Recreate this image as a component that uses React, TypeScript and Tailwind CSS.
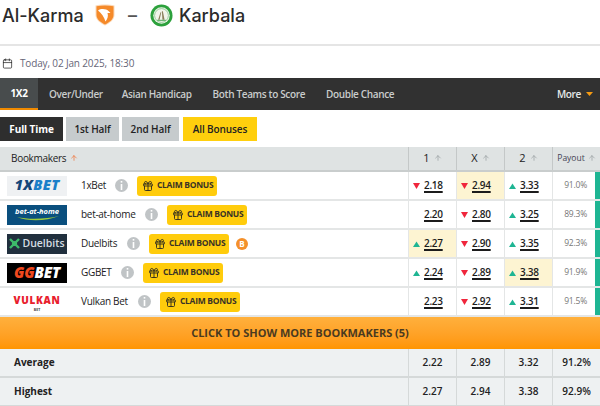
import React from "react";
import { ArrowUp, Calendar, Gift } from "lucide-react";

type Dir = "up" | "down" | null;
type Odd = { v: string; d: Dir; hi?: boolean };
type Row = {
  logo: React.ReactNode;
  name: string;
  nameGap: string;
  odds: Odd[];
  payout: string;
  btc?: boolean;
};

const Tri = ({ d }: { d: Dir }) => {
  if (!d) return <span className="w-[7px] shrink-0" />;
  return (
    <svg width="7" height="6" viewBox="0 0 7 6" className="shrink-0">
      {d === "up" ? <path d="M3.5 0.5 7 6H0z" fill="#1eb593" /> : <path d="M0 0h7L3.5 6z" fill="#f0263c" />}
    </svg>
  );
};

const InfoDot = () => (
  <span className="flex h-[13px] w-[13px] shrink-0 items-center justify-center rounded-full bg-[#c0c4c6]">
    <svg width="3" height="9" viewBox="0 0 3 9">
      <rect x="0.7" y="0" width="1.6" height="1.6" fill="#fff" />
      <rect x="0.7" y="3" width="1.6" height="6" fill="#fff" />
    </svg>
  </span>
);

const Claim = () => (
  <span className="ml-[9px] flex h-[20px] w-[80px] shrink-0 items-center gap-[3px] rounded-[3px] bg-[#ffcc0c] pl-[5px] text-[8.5px] font-bold tracking-[-0.3px] whitespace-nowrap text-[#3a3326]">
    <Gift size={12} strokeWidth={1.8} color="#2c2a20" className="shrink-0" />
    CLAIM BONUS
  </span>
);

const LogoBox = ({ className, children }: { className: string; children: React.ReactNode }) => (
  <div className={`flex h-[20px] w-[60px] shrink-0 items-center overflow-hidden ${className}`}>{children}</div>
);

const rows: Row[] = [
  {
    logo: (
      <LogoBox className="justify-center bg-[#eff1f3]">
        <span className="text-[14.5px] leading-none font-extrabold tracking-[0.3px] text-[#1a7fc9] italic">
          <span className="text-[#14467a]">1X</span>BET
        </span>
      </LogoBox>
    ),
    name: "1xBet",
    nameGap: "w-[34px]",
    odds: [
      { v: "2.18", d: "down" },
      { v: "2.94", d: "down", hi: true },
      { v: "3.33", d: "up" },
    ],
    payout: "91.0%",
  },
  {
    logo: (
      <LogoBox className="relative flex-col justify-center bg-[#0a4f7e]">
        <span className="mt-[-5px] text-[7.5px] leading-none font-bold text-white italic">bet-at-home</span>
        <svg width="46" height="6" viewBox="0 0 46 6" className="absolute bottom-[3px] left-[8px]">
          <path d="M2 1C14 6 32 5 44 0C32 3 14 4 2 1z" fill="#9ccb3b" />
        </svg>
      </LogoBox>
    ),
    name: "bet-at-home",
    nameGap: "w-[64px]",
    odds: [
      { v: "2.20", d: null },
      { v: "2.80", d: "down" },
      { v: "3.25", d: "up" },
    ],
    payout: "89.3%",
  },
  {
    logo: (
      <LogoBox className="justify-center gap-[2px] bg-[#21303e]">
        <svg width="11" height="11" viewBox="0 0 11 11">
          <path d="M1 1l9 9M10 1l-9 9" stroke="#3dbb6a" strokeWidth="2.4" />
          <circle cx="5.5" cy="5.5" r="2.6" fill="#3dbb6a" />
        </svg>
        <span className="text-[10.5px] leading-none font-semibold text-[#d5dce2]">Duelbits</span>
      </LogoBox>
    ),
    name: "Duelbits",
    nameGap: "w-[46px]",
    odds: [
      { v: "2.27", d: "up", hi: true },
      { v: "2.90", d: "down" },
      { v: "3.35", d: "up" },
    ],
    payout: "92.3%",
    btc: true,
  },
  {
    logo: (
      <LogoBox className="justify-center bg-black">
        <span className="text-[15px] leading-none font-extrabold tracking-[-0.2px] text-white italic">
          <span className="text-[#f0481e]">GG</span>BET
        </span>
      </LogoBox>
    ),
    name: "GGBET",
    nameGap: "w-[40px]",
    odds: [
      { v: "2.24", d: "up" },
      { v: "2.89", d: "down" },
      { v: "3.38", d: "up", hi: true },
    ],
    payout: "91.9%",
  },
  {
    logo: (
      <LogoBox className="flex-col justify-start bg-white">
        <div className="mt-[1px] h-[14px] text-[10px] leading-[14px] font-extrabold tracking-[0.7px] text-[#e8202c]">VULKAN</div>
        <div className="h-[5px] text-[3.5px] leading-[5px] font-bold text-[#444]">BET</div>
      </LogoBox>
    ),
    name: "Vulkan Bet",
    nameGap: "w-[57px]",
    odds: [
      { v: "2.23", d: null },
      { v: "2.92", d: "down" },
      { v: "3.31", d: "up" },
    ],
    payout: "91.5%",
  },
];

const SortUp = ({ c = "#9aa0a3" }: { c?: string }) => <ArrowUp size={8} strokeWidth={2.2} color={c} className="shrink-0" />;

const nav = [
  { t: "Over/Under", c: "ml-[11px] mr-[19px]" },
  { t: "Asian Handicap", c: "mr-[21px]" },
  { t: "Both Teams to Score", c: "mr-[21px]" },
  { t: "Double Chance", c: "" },
];

const gridCols = "grid grid-cols-[408px_48px_48px_48px_48px]";

export default function App() {
  return (
    <div className="h-[406px] w-[600px] overflow-hidden bg-white font-['Open_Sans',sans-serif] text-[#222]">
      <div className="flex h-[46px] items-start border-b-2 border-[#e5e5e5] pt-[2px] pl-[2px]">
        <div className="flex h-[26px] items-center font-['Inter',sans-serif] text-[18px] font-medium text-[#2b2b2b]">
          <span className="w-[93px]">Al-Karma</span>
          <svg width="20" height="22" viewBox="0 0 20 22" className="shrink-0">
            <path d="M0.5 1.5C6 .3 14 .3 19.5 1.5V11C19.5 16 14 19.5 10 21.5 6 19.5 .5 16 .5 11z" fill="#fbd9b8" />
            <path d="M1.5 2.3C7 1.3 13 1.3 18.5 2.3V11C18.5 15.5 14 18.5 10 20.4 6 18.5 1.5 15.5 1.5 11z" fill="#f58a2a" />
            <path d="M3 6.5C6 4.5 11 4.5 14 7.5L15.5 9 12.5 9C13.5 12 12.5 15 10.5 17.5 9 13 6.5 9 3 6.5z" fill="#fff" />
          </svg>
          <span className="ml-[13px] w-[22px] text-[#555]">–</span>
          <svg width="23" height="23" viewBox="0 0 24 24" className="shrink-0">
            <circle cx="12" cy="12" r="11.5" fill="#2ca13c" />
            <circle cx="12" cy="12" r="8.6" fill="#f2f4ea" />
            <circle cx="12" cy="12" r="7.2" fill="none" stroke="#7cc487" strokeWidth="0.8" />
            <path d="M8.5 16.5 11 8.5h.8L10 16.5zM13 16.5 12.4 7.5h1l1.8 9z" fill="#8a7f5a" />
            <path d="M7.5 16.5h9v1h-9z" fill="#4aa356" />
          </svg>
          <span className="ml-[6px]">Karbala</span>
        </div>
      </div>

      <div className="flex h-[32px] items-center pt-[2px] pl-[2px] text-[10px] tracking-[-0.15px] text-[#667]">
        <Calendar size={11} strokeWidth={1.6} color="#222" className="shrink-0" />
        <span className="ml-[7px]">Today, 02 Jan 2025, 18:30</span>
      </div>

      <div className="flex h-[32px] items-stretch bg-[#313131] text-[10px] font-semibold tracking-[-0.35px] text-[#c9cccc]">
        <div className="flex w-[38px] items-center justify-center border-b-[2px] border-[#f08a00] bg-[#484c4d] font-bold text-white">1X2</div>
        {nav.map((n) => (
          <div key={n.t} className={`flex items-center whitespace-nowrap ${n.c}`}>
            {n.t}
          </div>
        ))}
        <div className="ml-auto flex items-center gap-[5px] pr-[7px] text-[#e6e9ea]">
          More
          <svg width="7" height="4" viewBox="0 0 7 4">
            <path d="M0 0h7L3.5 4z" fill="#f59a12" />
          </svg>
        </div>
      </div>

      <div className="mt-[7px] flex h-[24px] text-[10px] font-semibold tracking-[-0.1px]">
        <div className="flex w-[63px] items-center justify-center bg-[#2e2e2e] font-bold text-white">Full Time</div>
        <div className="ml-[3px] flex w-[53px] items-center justify-center bg-[#c6cbcd]">1st Half</div>
        <div className="ml-[3px] flex w-[57px] items-center justify-center bg-[#c6cbcd]">2nd Half</div>
        <div className="ml-[4px] flex w-[74px] items-center justify-center bg-[#ffcf0d]">All Bonuses</div>
      </div>

      <div className={`${gridCols} mt-[6px] h-[25px] border-b-2 border-[#c9cdcd] bg-[#dfe3e3] text-[10px]`}>
        <div className="flex items-center gap-[4px] pb-[1px] pl-[11px] font-medium tracking-[-0.3px]">
          Bookmakers <SortUp c="#f0743a" />
        </div>
        {["1", "X", "2"].map((h) => (
          <div key={h} className="flex items-center justify-center gap-[4px] border-l border-[#c4c8c8] pb-[1px] text-[11px] text-[#222]">
            {h} <SortUp />
          </div>
        ))}
        <div className="flex items-center justify-center gap-[3px] border-l border-[#c4c8c8] pb-[1px] text-[8.5px] font-medium text-[#445]">
          Payout <SortUp />
        </div>
      </div>

      {rows.map((r) => (
        <div key={r.name} className={`${gridCols} h-[29px] border-b-2 border-[#e4e6e6]`}>
          <div className="flex items-center pl-[7px]">
            {r.logo}
            <span className={`${r.nameGap} ml-[14px] text-[10px] tracking-[-0.3px] whitespace-nowrap text-[#222]`}>{r.name}</span>
            <InfoDot />
            <Claim />
            {r.btc && (
              <span className="ml-[7px] flex h-[12px] w-[12px] items-center justify-center rounded-full bg-[#f4902a] text-[8px] leading-none font-bold text-white">
                B
              </span>
            )}
          </div>
          {r.odds.map((o) => (
            <div key={o.v} className={`flex items-center gap-[4px] border-l border-[#e4e6e6] pl-[4px] ${o.hi ? "bg-[#fdf4d2]" : "bg-white"}`}>
              <Tri d={o.d} />
              <span className="text-[10px] font-semibold tracking-[-0.3px] text-[#1c1c1c] underline decoration-[1.5px] underline-offset-2">{o.v}</span>
            </div>
          ))}
          <div className="flex items-stretch border-l border-[#e4e6e6]">
            <span className="flex flex-1 items-center justify-end pr-[8px] text-[8.5px] tracking-[-0.2px] text-[#777]">{r.payout}</span>
            <span className="w-[5px] bg-[#1eb593]" />
          </div>
        </div>
      ))}

      <div className="flex h-[32px] items-center justify-center bg-gradient-to-b from-[#ffb03c] to-[#ff9500] text-[11px] font-bold text-[#4a3a20]">
        CLICK TO SHOW MORE BOOKMAKERS (5)
      </div>

      {[
        ["Average", "2.22", "2.89", "3.32", "91.2%"],
        ["Highest", "2.27", "2.94", "3.38", "92.9%"],
      ].map((r) => (
        <div key={r[0]} className={`${gridCols} h-[29px] border-b-2 border-[#d5d9d9] bg-[#eef1f2] text-[10px] font-bold text-[#222]`}>
          <div className="flex items-center pl-[14px]">{r[0]}</div>
          {r.slice(1).map((v, i) => (
            <div key={i} className="flex items-center justify-center border-l border-[#d5d9d9] font-semibold">
              {v}
            </div>
          ))}
        </div>
      ))}
    </div>
  );
}
